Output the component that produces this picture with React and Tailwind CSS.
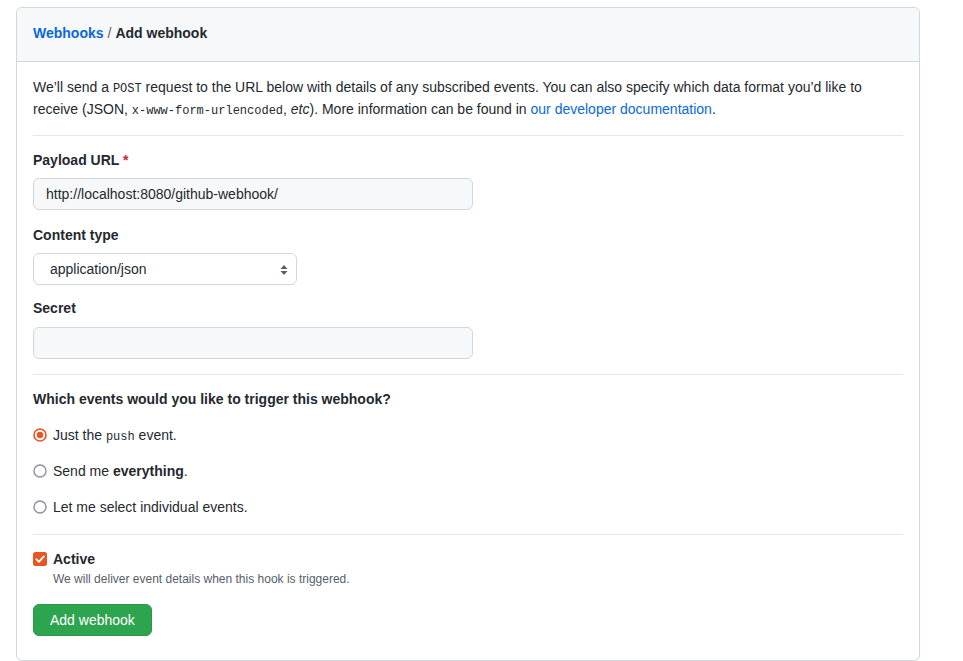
const sans = { fontFamily: '"Liberation Sans", Arial, sans-serif' };
const mono = { fontFamily: '"Liberation Mono", monospace' };

const Radio = ({ checked }) => (
  <svg width="14" height="14" viewBox="0 0 14 14" className="shrink-0">
    {checked ? (
      <>
        <circle cx="7" cy="7" r="6" fill="white" stroke="#e95420" strokeWidth="1.6" />
        <circle cx="7" cy="7" r="3.2" fill="#e95420" />
      </>
    ) : (
      <circle cx="7" cy="7" r="6" fill="white" stroke="#8f8f9d" strokeWidth="1.4" />
    )}
  </svg>
);

const Divider = () => <div className="h-px bg-[#e4e7eb]" />;

export default function App() {
  return (
    <div className="min-h-screen bg-white pt-[7px] pl-4 text-[14px] text-[#24292f]" style={sans}>
      <div className="w-[904px] rounded-md border border-[#d0d7de] bg-white">
        {/* Header */}
        <div className="flex h-[54px] items-center rounded-t-md border-b border-[#d0d7de] bg-[#f6f8fa] px-4 pb-[2px] font-bold">
          <a className="text-[#0969da]">Webhooks</a>
          <span className="mx-1 font-normal text-[#57606a]">/</span>
          <span>Add webhook</span>
        </div>

        <div className="px-4 pt-[14px] pb-6">
          <p className="mb-[15px] leading-[22px]">
            We’ll send a{" "}
            <code className="text-[12px] leading-none" style={mono}>POST</code>{" "}
            request to the URL below with details of any subscribed events. You can also specify which data format you’d like to receive (JSON,{" "}
            <code className="text-[12px] leading-none" style={mono}>x-www-form-urlencoded</code>, <em>etc</em>). More information can be found in{" "}
            <a className="text-[#0969da]">our developer documentation</a>.
          </p>
          <Divider />

          {/* Payload URL */}
          <label className="mt-[14px] mb-2 block font-bold leading-5">
            Payload URL <span className="text-[#cf222e]">*</span>
          </label>
          <div className="flex h-8 w-[440px] items-center rounded-md border border-[#d0d7de] bg-[#f6f8fa] px-3">
            http://localhost:8080/github-webhook/
          </div>

          {/* Content type */}
          <label className="mt-[15px] mb-2 block font-bold leading-5">Content type</label>
          <div className="relative flex h-8 w-[264px] items-center rounded-md border border-[#d0d7de] bg-white pl-4">
            application/json
            <svg className="absolute right-[7px] top-[10px]" width="10" height="12" viewBox="0 0 10 12">
              <path d="M5 1 L8.5 5 H1.5 Z" fill="#57606a" />
              <path d="M5 11 L8.5 7 H1.5 Z" fill="#57606a" />
            </svg>
          </div>

          {/* Secret */}
          <label className="mt-[13px] mb-[9px] block font-bold leading-5">Secret</label>
          <div className="h-8 w-[440px] rounded-md border border-[#d0d7de] bg-[#f6f8fa]" />

          <div className="mt-[15px]">
            <Divider />
          </div>

          {/* Events */}
          <h3 className="mt-[14px] font-bold leading-5">Which events would you like to trigger this webhook?</h3>
          <div className="mt-4 flex flex-col gap-4">
            <div className="flex h-5 items-center gap-[6px]">
              <Radio checked />
              <span>
                Just the{" "}
                <code className="text-[12px] leading-none" style={mono}>push</code> event.
              </span>
            </div>
            <div className="flex h-5 items-center gap-[6px]">
              <Radio />
              <span>
                Send me <strong>everything</strong>.
              </span>
            </div>
            <div className="flex h-5 items-center gap-[6px]">
              <Radio />
              <span>Let me select individual events.</span>
            </div>
          </div>

          <div className="mt-[17px]">
            <Divider />
          </div>

          {/* Active */}
          <div className="mt-[14px] flex gap-[6px]">
            <svg width="14" height="14" viewBox="0 0 14 14" className="mt-[3px] shrink-0">
              <rect x="0" y="0" width="14" height="14" rx="2.5" fill="#e95420" />
              <path d="M3.3 7.2 L5.9 9.8 L10.8 4.4" fill="none" stroke="white" strokeWidth="1.9" strokeLinecap="round" strokeLinejoin="round" />
            </svg>
            <div>
              <div className="font-bold leading-5">Active</div>
              <div className="text-[12px] leading-5 text-[#57606a]">We will deliver event details when this hook is triggered.</div>
            </div>
          </div>

          <button className="mt-[15px] h-8 rounded-md border border-[#2c974b] bg-[#2da44e] px-4 text-white">
            Add webhook
          </button>
        </div>
      </div>
    </div>
  );
}
